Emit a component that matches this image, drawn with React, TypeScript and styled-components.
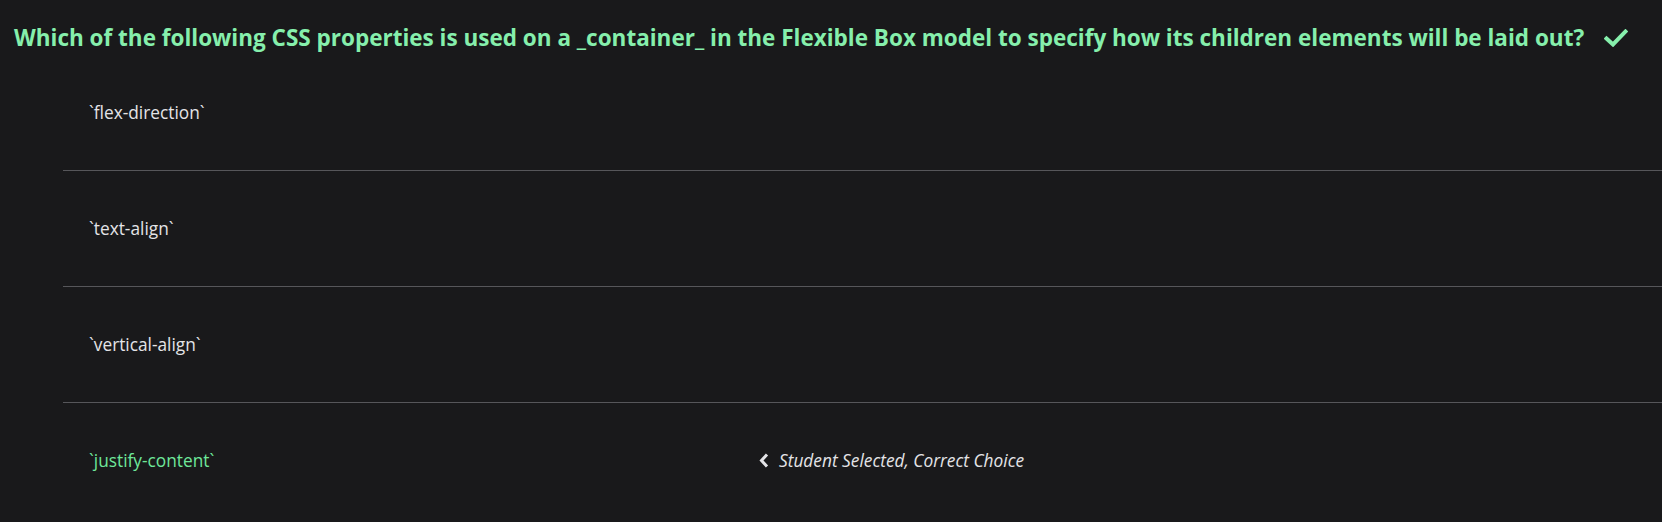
import styled, { createGlobalStyle } from "styled-components";

const GlobalStyle = createGlobalStyle`
  html, body {
    margin: 0;
    padding: 0;
    background: #19191b;
  }
  body {
    font-family: "Open Sans", "Noto Sans", sans-serif;
    color: #e4e4e7;
  }
`;

const Page = styled.div`
  width: 1662px;
  height: 522px;
  overflow: hidden;
  background: #19191b;
`;

const Question = styled.h2`
  display: flex;
  align-items: center;
  gap: 20px;
  margin: 22px 0 1px 14px;
  font-size: 22.5px;
  line-height: 32px;
  font-weight: 700;
  white-space: nowrap;
  color: #86efac;
`;

const Check = styled.svg`
  width: 24px;
  height: 18px;
  flex-shrink: 0;
`;

const Choices = styled.ul`
  list-style: none;
  margin: 0 0 0 63px;
  padding: 0;
`;

const Choice = styled.li`
  display: grid;
  grid-template-columns: 669px 1fr;
  align-items: center;
  padding: 45.5px 0 45.5px 26px;
  border-bottom: 1px solid #56565a;
  font-size: 17.3px;
  line-height: 24px;

  &:last-child {
    border-bottom: none;
  }
`;

const Label = styled.span<{ $correct?: boolean }>`
  color: ${(p) => (p.$correct ? "#6ee79a" : "#e4e4e7")};
`;

const Note = styled.span`
  display: flex;
  align-items: center;
  gap: 8px;
  font-style: italic;
  color: #e4e4e7;
`;

const Chevron = styled.svg`
  width: 13px;
  height: 15px;
`;

type Option = { text: string; correct?: boolean; note?: string };

const options: Option[] = [
  { text: "`flex-direction`" },
  { text: "`text-align`" },
  { text: "`vertical-align`" },
  {
    text: "`justify-content`",
    correct: true,
    note: "Student Selected, Correct Choice",
  },
];

export default function App() {
  return (
    <Page>
      <GlobalStyle />
      <Question>
        Which of the following CSS properties is used on a _container_ in the
        Flexible Box model to specify how its children elements will be laid
        out?
        <Check viewBox="0 0 24 18">
          <polyline
            points="2.5,9.5 9,15.5 21.5,2.5"
            fill="none"
            stroke="#86efac"
            strokeWidth="4"
            strokeLinecap="square"
          />
        </Check>
      </Question>
      <Choices>
        {options.map((o) => (
          <Choice key={o.text}>
            <Label $correct={o.correct}>{o.text}</Label>
            {o.note && (
              <Note>
                <Chevron viewBox="0 0 13 15">
                  <polyline
                    points="9,1.5 3.5,7.5 9,13.5"
                    fill="none"
                    stroke="#e4e4e7"
                    strokeWidth="3"
                  />
                </Chevron>
                {o.note}
              </Note>
            )}
          </Choice>
        ))}
      </Choices>
    </Page>
  );
}
